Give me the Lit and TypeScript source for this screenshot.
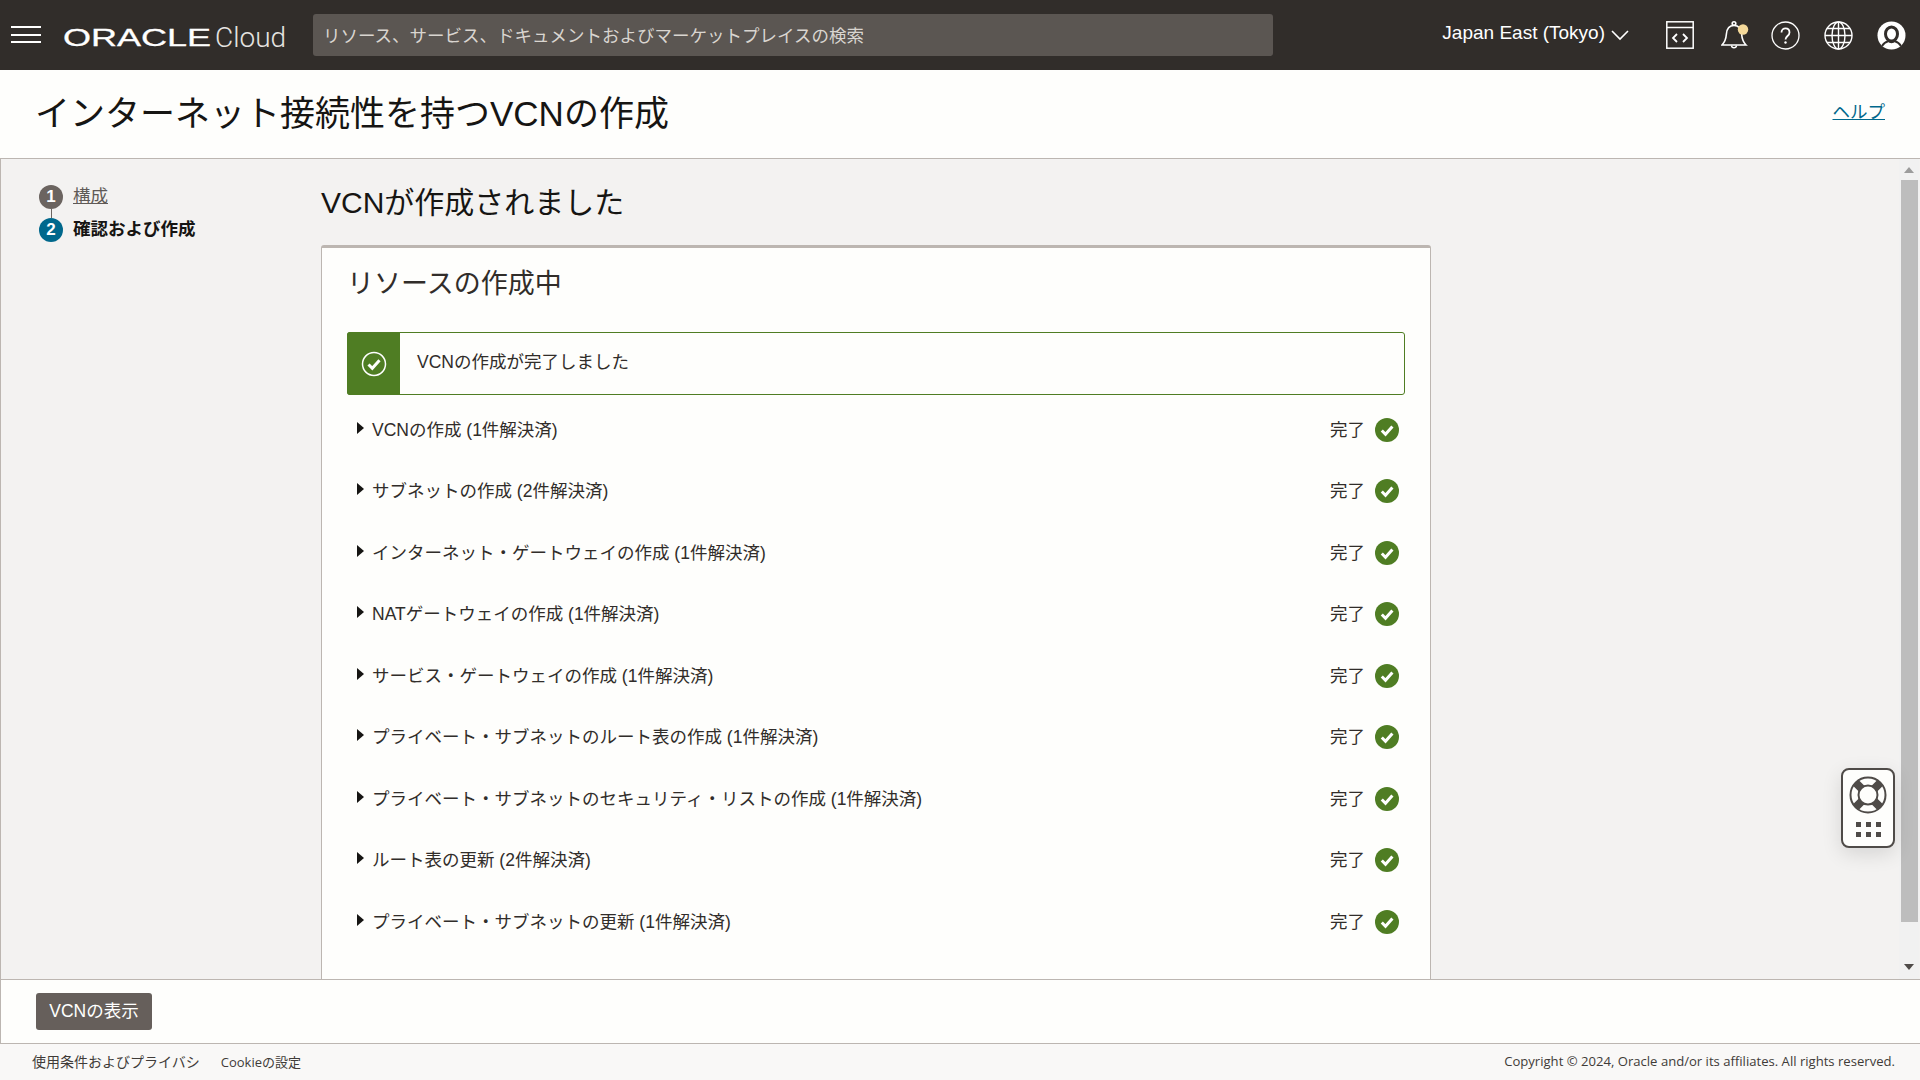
import { LitElement, html, css, svg } from 'lit';
import { customElement } from 'lit/decorators.js';

const rows = [
  'VCNの作成 (1件解決済)',
  'サブネットの作成 (2件解決済)',
  'インターネット・ゲートウェイの作成 (1件解決済)',
  'NATゲートウェイの作成 (1件解決済)',
  'サービス・ゲートウェイの作成 (1件解決済)',
  'プライベート・サブネットのルート表の作成 (1件解決済)',
  'プライベート・サブネットのセキュリティ・リストの作成 (1件解決済)',
  'ルート表の更新 (2件解決済)',
  'プライベート・サブネットの更新 (1件解決済)',
];

const checkMark = svg`<path d="M6.800 12.500l3.700 3.700 6.900-7.700" fill="none" stroke="#fff" stroke-width="3"/>`;

@customElement('app-root')
export class AppRoot extends LitElement {
  static styles = css`
    :host {
      display: flex;
      flex-direction: column;
      height: 1080px;
      overflow: hidden;
      font-family: 'Liberation Sans', 'Noto Sans CJK JP', sans-serif;
      font-size: 17.5px;
      color: #312d2a;
      background: #fefefc;
    }
    .top {
      display: flex;
      align-items: center;
      flex: none;
      height: 70px;
      padding: 0 2px 0 11px;
      background: #312d2a;
      color: #fff;
    }
    .burger {
      flex: none;
      width: 30px;
      height: 13px;
      border-top: 2px solid #fff;
      border-bottom: 2px solid #fff;
      position: relative;
      margin-top: -1px;
    }
    .burger::after {
      content: '';
      position: absolute;
      left: 0;
      right: 0;
      top: 5.500px;
      height: 2px;
      background: #fff;
    }
    .logo {
      display: flex;
      align-items: center;
      flex: none;
      width: 250px;
      margin-left: 22px;
      padding-top: 6px;
    }
    .oracle {
      font-family: 'Liberation Sans', sans-serif;
      font-size: 24px;
      line-height: 30px;
      width: 142px;
      transform-origin: left center;
      transform: scaleX(1.5);
      white-space: nowrap;
      -webkit-text-stroke: 0.3px #fff;
    }
    .cloud {
      margin-left: 10px;
      font-family: Roboto, sans-serif;
      font-weight: 300;
      font-size: 28px;
      line-height: 30px;
      color: #e6e4e1;
    }
    .search {
      flex: none;
      width: 950px;
      height: 42px;
      margin-top: -1px;
      padding: 0 0 0 10px;
      line-height: 44px;
      border-radius: 3px;
      background: #5b5652;
      color: #d9d5d0;
    }
    .region {
      display: flex;
      align-items: center;
      gap: 6px;
      margin-left: auto;
      margin-right: 24px;
      margin-top: -4px;
      font-size: 19px;
      white-space: nowrap;
    }
    .region svg {
      margin-top: 4px;
    }
    .cell {
      display: flex;
      justify-content: center;
      align-items: center;
      width: 53px;
    }
    .bell {
      margin-left: 5px;
    }
    .title {
      display: flex;
      justify-content: space-between;
      align-items: center;
      flex: none;
      height: 80px;
      padding: 0 35px 8px 35px;
      border-bottom: 1px solid #bcb6b1;
    }
    h1 {
      margin: 0;
      font-size: 35px;
      font-weight: 400;
      color: #161513;
    }
    .help {
      color: #00688c;
      text-decoration: underline;
    }
    .body {
      display: flex;
      flex: 1;
      min-height: 0;
      overflow: hidden;
      position: relative;
      background: #f3f2f1;
      border-left: 1px solid #bcb6b1;
    }
    .steps {
      flex: none;
      width: 320px;
      padding: 26px 0 0 38px;
      box-sizing: border-box;
    }
    .step {
      display: flex;
      align-items: center;
      gap: 10px;
      height: 24px;
      margin-bottom: 9px;
      position: relative;
    }
    .step a,
    .step b {
      padding-bottom: 5px;
    }
    .num {
      flex: none;
      width: 24px;
      height: 24px;
      border-radius: 50%;
      background: #6b6460;
      color: #fff;
      font-size: 17px;
      font-weight: 700;
      line-height: 24px;
      text-align: center;
    }
    .step.on .num {
      background: #00688c;
    }
    .step a {
      color: #5f5a57;
      text-decoration: underline;
    }
    .step.on b {
      color: #161513;
    }
    .step + .step::before {
      content: '';
      position: absolute;
      left: 12px;
      top: -9px;
      width: 1px;
      height: 9px;
      background: #6b6460;
    }
    .main {
      flex: none;
      width: 1110px;
    }
    h2 {
      margin: 25px 0 23px;
      font-size: 30px;
      line-height: 38px;
      font-weight: 400;
      color: #161513;
    }
    .card {
      box-sizing: border-box;
      height: 900px;
      padding: 0 25px;
      background: #fefefc;
      border: 1px solid #bcb6b1;
      border-top-width: 3px;
      border-radius: 3px 3px 0 0;
    }
    h3 {
      margin: 19px 0 0;
      font-size: 27px;
      line-height: 34px;
      font-weight: 400;
      color: #312d2a;
    }
    .banner {
      display: flex;
      align-items: center;
      height: 63px;
      box-sizing: border-box;
      margin-top: 31px;
      border: 1px solid #4f7d23;
      border-radius: 3px;
    }
    .banner-icon {
      display: flex;
      align-items: center;
      justify-content: center;
      flex: none;
      align-self: stretch;
      width: 53px;
      margin: -1px 0 -1px -1px;
      border-radius: 3px 0 0 3px;
      background: #4f7d23;
    }
    .banner span {
      margin-left: 17px;
      padding-bottom: 6px;
    }
    .rows {
      margin-top: 4px;
    }
    .row {
      display: flex;
      align-items: center;
      height: 61.500px;
      padding: 0 6px 0 10px;
    }
    .row span {
      padding-bottom: 3px;
    }
    .tri {
      flex: none;
      width: 0;
      height: 0;
      margin: -4px 8px 0 0;
      border-left: 7px solid #161513;
      border-top: 6px solid transparent;
      border-bottom: 6px solid transparent;
    }
    .row .done {
      margin: 0 10px 0 auto;
    }
    .scrollbar {
      display: flex;
      flex-direction: column;
      align-items: center;
      flex: none;
      width: 20px;
      margin-left: auto;
      margin-right: 1px;
      background: #f1f1f1;
    }
    .arrow {
      flex: none;
      height: 21px;
      display: flex;
      align-items: center;
      justify-content: center;
    }
    .arrow.down {
      margin-top: auto;
      margin-bottom: 2px;
    }
    .thumb {
      flex: none;
      align-self: stretch;
      height: 742px;
      margin: 0 1px 0 2px;
      background: #bdbdbd;
    }
    .floater {
      position: absolute;
      left: 1840px;
      top: 609px;
      box-sizing: border-box;
      width: 54px;
      height: 80px;
      padding-top: 6px;
      background: #fefefc;
      border: 2px solid #4f4b48;
      border-radius: 8px;
      box-shadow: 0 6px 20px rgba(0, 0, 0, 0.12);
    }
    .floater svg {
      display: block;
      margin: 0 auto;
    }
    .floater svg + svg {
      margin-top: 8px;
    }
    .actions {
      flex: none;
      height: 64px;
      padding: 13px 0 0 36px;
      box-sizing: border-box;
      border-top: 1px solid #bcb6b1;
      border-left: 1px solid #bcb6b1;
    }
    button {
      display: block;
      width: 116px;
      height: 37px;
      margin-left: -1px;
      padding: 0 0 5px;
      border: 0;
      border-radius: 3px;
      background: #665f5b;
      color: #fff;
      font: inherit;
    }
    .foot {
      display: flex;
      align-items: center;
      flex: none;
      height: 37px;
      box-sizing: border-box;
      padding: 0 25px 2px 32px;
      border-top: 1px solid #bcb6b1;
      background: #f9f8f7;
      font-family: 'Open Sans', 'Noto Sans CJK JP', sans-serif;
      font-size: 14px;
      color: #3f3b38;
    }
    .foot .cookie {
      margin-left: 21px;
      font-size: 13px;
    }
    .foot .copy {
      margin-left: auto;
      font-size: 13.100px;
    }
  `;

  render() {
    return html`
      <div class="top">
        <div class="burger"></div>
        <div class="logo">
          <span class="oracle">ORACLE</span><span class="cloud">Cloud</span>
        </div>
        <div class="search">リソース、サービス、ドキュメントおよびマーケットプレイスの検索</div>
        <div class="region">
          Japan East (Tokyo)
          <svg width="18" height="11" viewBox="0 0 18 11"><path d="M1 1l8 8 8-8" fill="none" stroke="#fff" stroke-width="1.600"/></svg>
        </div>
        <div class="cell">
          <svg width="28" height="28" viewBox="0 0 28 28" fill="none" stroke="#fff" stroke-width="1.500">
            <rect x=".8" y=".8" width="26.400" height="26.400"/><path d="M.8 6.500h26.400"/>
            <path d="M11 13l-4 4 4 4M17 13l4 4-4 4" stroke-width="1.800"/>
          </svg>
        </div>
        <div class="cell">
          <svg class="bell" width="28" height="30" viewBox="0 0 28 30" fill="none" stroke="#fff" stroke-width="1.600">
            <path d="M1 25c3-3 4-6 4.400-11 .4-5 3-8.500 7.600-8.500s7.200 3.500 7.600 8.500c.4 5 1.400 8 4.400 11z"/>
            <path d="M10.500 25.500c.3 3 4.700 3 5 0"/><circle cx="13" cy="3.500" r="1.800"/>
            <circle cx="22" cy="9.500" r="5.200" fill="#f5d99a" stroke="none"/>
          </svg>
        </div>
        <div class="cell">
          <svg width="29" height="29" viewBox="0 0 29 29" fill="none" stroke="#fff" stroke-width="1.300">
            <circle cx="14.500" cy="14.500" r="13.500"/>
            <path d="M10.500 11.500c0-5.500 8-5.500 8 0 0 3.500-4 3.500-4 7" stroke-width="1.800"/>
            <circle cx="14.500" cy="21.500" r="1.200" fill="#fff" stroke="none"/>
          </svg>
        </div>
        <div class="cell">
          <svg width="29" height="29" viewBox="0 0 29 29" fill="none" stroke="#fff" stroke-width="1.400">
            <circle cx="14.500" cy="14.500" r="13.500"/><ellipse cx="14.500" cy="14.500" rx="6.500" ry="13.500"/>
            <path d="M14.500 1v27M1 14.500h27M3 7.500h23M3 21.500h23"/>
          </svg>
        </div>
        <div class="cell">
          <svg width="29" height="29" viewBox="0 0 29 29">
            <circle cx="14.500" cy="14.500" r="14" fill="#fff"/>
            <ellipse cx="14.500" cy="13" rx="6" ry="7" fill="none" stroke="#312d2a" stroke-width="3"/>
            <path d="M5 25c2-3.500 5-4.500 6.500-5 1.500 1.500 4.500 1.500 6 0 1.500.5 4.500 1.500 6.500 5" fill="none" stroke="#312d2a" stroke-width="2"/>
          </svg>
        </div>
      </div>
      <div class="title">
        <h1>インターネット接続性を持つVCNの作成</h1>
        <a class="help">ヘルプ</a>
      </div>
      <div class="body">
        <div class="steps">
          <div class="step"><span class="num">1</span><a>構成</a></div>
          <div class="step on"><span class="num">2</span><b>確認および作成</b></div>
        </div>
        <div class="main">
          <h2>VCNが作成されました</h2>
          <div class="card">
            <h3>リソースの作成中</h3>
            <div class="banner">
              <div class="banner-icon">
                <svg width="26" height="26" viewBox="0 0 26 26" fill="none" stroke="#fff">
                  <circle cx="13" cy="13" r="11.500" stroke-width="1.500"/>
                  <path d="M7.500 13.500l3.800 3.800 7.200-8" stroke-width="3"/>
                </svg>
              </div>
              <span>VCNの作成が完了しました</span>
            </div>
            <div class="rows">
              ${rows.map(
                r => html`
                  <div class="row">
                    <i class="tri"></i>
                    <span>${r}</span>
                    <span class="done">完了</span>
                    <svg width="24" height="24" viewBox="0 0 24 24">
                      <circle cx="12" cy="12" r="12" fill="#4f7d23"/>${checkMark}
                    </svg>
                  </div>
                `
              )}
            </div>
          </div>
        </div>
        <div class="scrollbar">
          <div class="arrow"><svg width="10" height="6"><path d="M5 0l5 6H0z" fill="#9c9c9c"/></svg></div>
          <div class="thumb"></div>
          <div class="arrow down"><svg width="10" height="6"><path d="M0 0h10L5 6z" fill="#4f4b48"/></svg></div>
        </div>
        <div class="floater">
          <svg width="38" height="38" viewBox="0 0 38 38" fill="none" stroke="#4f4b48">
            <circle cx="19" cy="19" r="17.500" stroke-width="2"/><circle cx="19" cy="19" r="9.500" stroke-width="2"/>
            <path d="M6.600 6.600l6 6M31.400 6.600l-6 6M6.600 31.400l6-6M31.400 31.400l-6-6" stroke-width="8"/>
          </svg>
          <svg width="25" height="15" viewBox="0 0 25 15" fill="#4f4b48">
            <rect width="5" height="5"/><rect x="10" width="5" height="5"/><rect x="20" width="5" height="5"/>
            <rect y="10" width="5" height="5"/><rect x="10" y="10" width="5" height="5"/><rect x="20" y="10" width="5" height="5"/>
          </svg>
        </div>
      </div>
      <div class="actions"><button>VCNの表示</button></div>
      <div class="foot">
        <span>使用条件およびプライバシ</span>
        <span class="cookie">Cookieの設定</span>
        <span class="copy">Copyright © 2024, Oracle and/or its affiliates. All rights reserved.</span>
      </div>
    `;
  }
}
